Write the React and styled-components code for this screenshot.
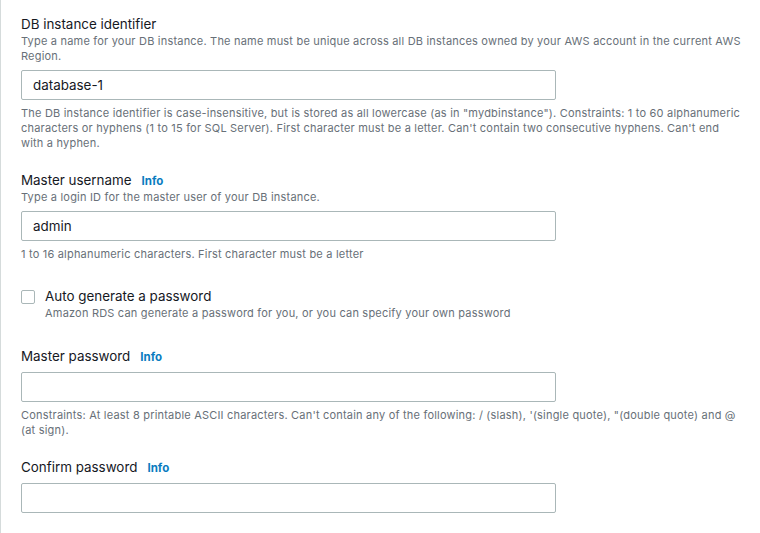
import styled, { createGlobalStyle } from 'styled-components';

const GlobalStyle = createGlobalStyle`
  html, body {
    margin: 0;
    padding: 0;
    background: #ffffff;
  }
  body {
    font-family: Inter, "Liberation Sans", Arial, sans-serif;
    color: #16191f;
  }
`;

const Page = styled.div`
  min-height: 533px;
  box-sizing: border-box;
  border-left: 1px solid #d5dbdb;
  padding: 14px 19px 0 20px;
`;

const Field = styled.div`
  display: flex;
  flex-direction: column;
  margin-top: ${(p) => p.$gap || 0}px;
`;

const Label = styled.div`
  display: flex;
  align-items: baseline;
  height: 20px;
  font-size: 13.4px;
  line-height: 20px;
  color: #16191f;
`;

const Info = styled.a`
  margin-left: 10px;
  font-size: 11.5px;
  line-height: 20px;
  font-weight: 700;
  color: #0a7cbf;
  text-decoration: none;
`;

const Description = styled.div`
  font-size: 11px;
  letter-spacing: 0.2px;
  line-height: 15px;
  color: #687078;
`;

const Hint = styled(Description)`
  margin-top: ${(p) => p.$top || 6}px;
`;

const Input = styled.input`
  box-sizing: border-box;
  width: 535px;
  height: 30px;
  margin-top: 6px;
  padding: 0 11px;
  border: 1px solid #aab7b8;
  border-radius: 2px;
  font-family: inherit;
  font-size: 13.4px;
  color: #16191f;
  background: #ffffff;
  outline: none;
`;

const CheckRow = styled.label`
  display: flex;
  align-items: flex-start;
`;

const Box = styled.span`
  box-sizing: border-box;
  flex: none;
  width: 14px;
  height: 14px;
  margin-top: 4px;
  margin-right: 10px;
  border: 1px solid #aab7b8;
  border-radius: 2px;
  background: #ffffff;
`;

const CheckText = styled.div`
  display: flex;
  flex-direction: column;
`;

function App() {
  return (
    <>
      <GlobalStyle />
      <Page>
        <Field>
          <Label>DB instance identifier</Label>
          <Description>
            Type a name for your DB instance. The name must be unique across all DB instances owned by your AWS account in the current AWS Region.
          </Description>
          <Input defaultValue="database-1" />
          <Hint>
            The DB instance identifier is case-insensitive, but is stored as all lowercase (as in "mydbinstance"). Constraints: 1 to 60 alphanumeric characters or hyphens (1 to 15 for SQL Server). First character must be a letter. Can't contain two consecutive hyphens. Can't end with a hyphen.
          </Hint>
        </Field>

        <Field $gap={19}>
          <Label>
            Master username <Info>Info</Info>
          </Label>
          <Description>Type a login ID for the master user of your DB instance.</Description>
          <Input defaultValue="admin" />
          <Hint>1 to 16 alphanumeric characters. First character must be a letter</Hint>
        </Field>

        <Field $gap={24}>
          <CheckRow>
            <Box />
            <CheckText>
              <Label>Auto generate a password</Label>
              <Description>Amazon RDS can generate a password for you, or you can specify your own password</Description>
            </CheckText>
          </CheckRow>
        </Field>

        <Field $gap={25}>
          <Label>
            Master password <Info>Info</Info>
          </Label>
          <Input type="password" />
          <Hint>
            Constraints: At least 8 printable ASCII characters. Can't contain any of the following: / (slash), '(single quote), "(double quote) and @ (at sign).
          </Hint>
        </Field>

        <Field $gap={19}>
          <Label>
            Confirm password <Info>Info</Info>
          </Label>
          <Input type="password" />
        </Field>
      </Page>
    </>
  );
}

export default App;
